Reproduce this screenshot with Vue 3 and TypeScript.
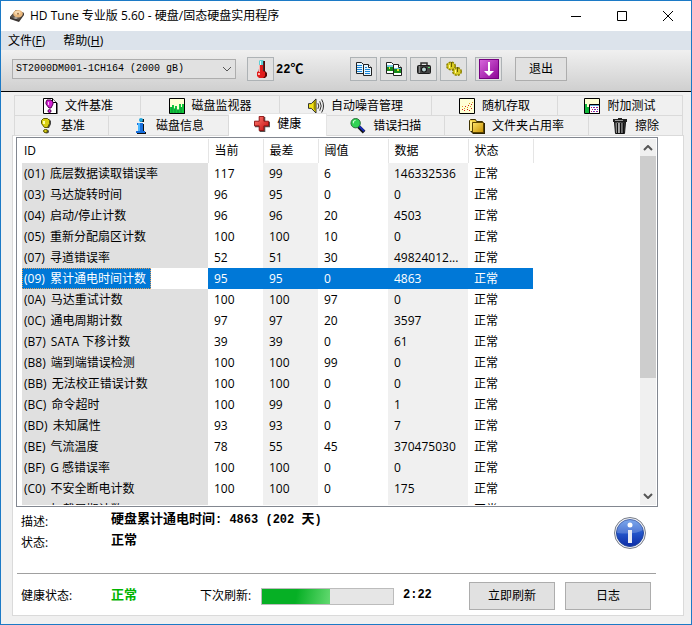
<script setup lang="ts">
import { ref } from 'vue'

interface Tab {
  label: string
  icon: string
  grow: number
}

interface Attribute {
  id: string
  name: string
  current: number
  worst: number
  threshold: number
  data: string
}

const drives: string[] = ['ST2000DM001-1CH164 (2000 gB)']
const drive = ref(drives[0])

const tools: { icon: string; label: string }[] = [
  { icon: 'copy-text', label: '复制文本' },
  { icon: 'copy-image', label: '复制图像' },
  { icon: 'camera', label: '保存截图' },
  { icon: 'gears', label: '选项' },
]

const backTabs: Tab[] = [
  { label: '文件基准', icon: 'file-bench', grow: 126 },
  { label: '磁盘监视器', icon: 'monitor', grow: 139 },
  { label: '自动噪音管理', icon: 'speaker', grow: 152 },
  { label: '随机存取', icon: 'random', grow: 126 },
  { label: '附加测试', icon: 'extra', grow: 125 },
]

const frontTabs: Tab[] = [
  { label: '基准', icon: 'bench', grow: 94 },
  { label: '磁盘信息', icon: 'info', grow: 120 },
  { label: '健康', icon: 'cross', grow: 98 },
  { label: '错误扫描', icon: 'scan', grow: 118 },
  { label: '文件夹占用率', icon: 'folder', grow: 144 },
  { label: '擦除', icon: 'trash', grow: 94 },
]
const activeTab = ref('健康')

const columns: string[] = ['ID', '当前', '最差', '阈值', '数据', '状态']

const attributes: Attribute[] = [
  { id: '01', name: '底层数据读取错误率', current: 117, worst: 99, threshold: 6, data: '146332536' },
  { id: '03', name: '马达旋转时间', current: 96, worst: 95, threshold: 0, data: '0' },
  { id: '04', name: '启动/停止计数', current: 96, worst: 96, threshold: 20, data: '4503' },
  { id: '05', name: '重新分配扇区计数', current: 100, worst: 100, threshold: 10, data: '0' },
  { id: '07', name: '寻道错误率', current: 52, worst: 51, threshold: 30, data: '49824012...' },
  { id: '09', name: '累计通电时间计数', current: 95, worst: 95, threshold: 0, data: '4863' },
  { id: '0A', name: '马达重试计数', current: 100, worst: 100, threshold: 97, data: '0' },
  { id: '0C', name: '通电周期计数', current: 97, worst: 97, threshold: 20, data: '3597' },
  { id: 'B7', name: 'SATA 下移计数', current: 39, worst: 39, threshold: 0, data: '61' },
  { id: 'B8', name: '端到端错误检测', current: 100, worst: 100, threshold: 99, data: '0' },
  { id: 'BB', name: '无法校正错误计数', current: 100, worst: 100, threshold: 0, data: '0' },
  { id: 'BC', name: '命令超时', current: 100, worst: 99, threshold: 0, data: '1' },
  { id: 'BD', name: '未知属性', current: 93, worst: 93, threshold: 0, data: '7' },
  { id: 'BE', name: '气流温度', current: 78, worst: 55, threshold: 45, data: '370475030' },
  { id: 'BF', name: 'G 感错误率', current: 100, worst: 100, threshold: 0, data: '0' },
  { id: 'C0', name: '不安全断电计数', current: 100, worst: 100, threshold: 0, data: '175' },
  { id: 'C1', name: '加载周期计数', current: 98, worst: 98, threshold: 0, data: '4863' },
]
const selectedId = ref('09')
</script>

<template>
  <svg class="sprite" aria-hidden="true">
    <defs>
      <linearGradient id="g-red" x1="0" y1="0" x2="1" y2="1">
        <stop offset="0" stop-color="#ff7a70" />
        <stop offset="1" stop-color="#c40d0d" />
      </linearGradient>
      <linearGradient id="g-violet" x1="0" y1="0" x2="1" y2="1">
        <stop offset="0" stop-color="#d867dc" />
        <stop offset="1" stop-color="#8d0396" />
      </linearGradient>
      <linearGradient id="g-blue" x1="0" y1="0" x2="0" y2="1">
        <stop offset="0" stop-color="#5c93e8" />
        <stop offset="0.5" stop-color="#2355c9" />
        <stop offset="1" stop-color="#0c2ba6" />
      </linearGradient>
      <linearGradient id="g-trash" x1="0" y1="0" x2="1" y2="0">
        <stop offset="0" stop-color="#333" />
        <stop offset="0.3" stop-color="#bbb" />
        <stop offset="1" stop-color="#222" />
      </linearGradient>
      <linearGradient id="g-folder" x1="0" y1="0" x2="1" y2="1">
        <stop offset="0" stop-color="#ffe46a" />
        <stop offset="1" stop-color="#c58f00" />
      </linearGradient>
    </defs>

    <symbol id="disk" viewBox="0 0 16 16">
      <path d="M1 9 7 2l8 3v2l-5 7-9-3z" fill="#3a3532" />
      <path d="M1 9 7 2l8 3-5 7z" fill="#5c534c" />
      <ellipse cx="9" cy="5.800" rx="4.800" ry="3.800" fill="#e9b77c" />
      <ellipse cx="8.500" cy="4.800" rx="3" ry="2" fill="#f8d9ae" />
      <ellipse cx="9" cy="5.800" rx="1" ry="1" fill="#a07448" />
      <path d="m4 10 3-1 2 1-2 1z" fill="#b8b2ab" />
    </symbol>

    <symbol id="thermo" viewBox="0 0 16 20">
      <path d="M7 2h5v10l2 2v3l-2 2H7l-2-2z" fill="#5a0505" />
      <path d="M6 2h4v10l2 1v4l-2 2H6l-2-2v-4l2-1z" fill="#e01c1c" />
      <path d="M7 1h3l1 1v4H6V2z" fill="#5fd0d6" />
      <path d="M7 2h1v4H7z" fill="#d6ffff" />
      <path d="M6 6h1v7H6zM5 14h2v2H5z" fill="#ffb0aa" />
      <path d="M10 2h1v10h-1z" fill="#333" />
    </symbol>

    <symbol id="copy-text" viewBox="0 0 18 18">
      <path d="M1.500 2.500h5l2 2v9h-7z" fill="#e6f6ff" stroke="#222" />
      <path d="M2 5.500h5M2 7.500h5M2 9.500h5M2 11.500h5" stroke="#1684d8" />
      <path d="M8.500 4.500h5l3 3v8h-8z" fill="#e6f6ff" stroke="#222" />
      <path d="M13.500 4.500v3h3" fill="#fff" stroke="#222" />
      <path d="M10 7.500h2M10 9.500h5M10 11.500h5M10 13.500h5" stroke="#1684d8" />
    </symbol>

    <symbol id="copy-image" viewBox="0 0 18 18">
      <path d="M1.500 2.500h5l2 2v9h-7z" fill="#fff" stroke="#222" />
      <path d="M2 5h6v6H2z" fill="#168b18" />
      <path d="M2 5h6v2H2z" fill="#71c6df" />
      <path d="M8.500 4.500h5l3 3v8h-8z" fill="#fff" stroke="#222" />
      <path d="M9 8h7v5H9z" fill="#168b18" />
      <path d="M9 8h7v1H9z" fill="#71c6df" />
      <path d="M12 9h2v2h-2zM4 7h1v2H4z" fill="#e6e438" />
      <path d="M13.500 4.500v3h3" fill="#fff" stroke="#222" />
    </symbol>

    <symbol id="camera" viewBox="0 0 18 18">
      <path d="M6 5V3h6v2" fill="none" stroke="#333" stroke-width="1.500" />
      <rect x="2.500" y="5.500" width="13" height="8" rx="1" fill="#454545" stroke="#1c1c1c" />
      <path d="M4 6h1v7H4z" fill="#888" />
      <circle cx="9" cy="9.500" r="3" fill="#111" />
      <circle cx="9" cy="9.500" r="2" fill="#b9d3d3" />
      <path d="M13 7h2v1h-2z" fill="#52e06c" />
    </symbol>

    <symbol id="gears" viewBox="0 0 18 18">
      <g fill="#d8cb22" stroke="#8d8200">
        <ellipse cx="6" cy="6" rx="4" ry="3.500" stroke-width="2" stroke-dasharray="2 1" />
        <ellipse cx="6" cy="6" rx="3.500" ry="3" stroke="none" />
        <ellipse cx="12" cy="11.500" rx="4" ry="3.500" stroke-width="2" stroke-dasharray="2 1" />
        <ellipse cx="12" cy="11.500" rx="3.500" ry="3" stroke="none" />
      </g>
      <path d="M6.500 2v5M12.500 7v5" stroke="#645c00" />
      <path d="M4 5h1v3H4zM10 10h1v3h-1z" fill="#fff79a" />
    </symbol>

    <symbol id="update" viewBox="0 0 20 20">
      <rect x="0.500" y="0.500" width="19" height="19" fill="url(#g-violet)" stroke="#750080" />
      <path d="M9 3h2v9h4l-5 5-5-5h4z" fill="#fff" />
    </symbol>

    <symbol id="file-bench" viewBox="0 0 16 16">
      <path d="M1.500.500h9l4 4v11h-13z" fill="#fff" stroke="#000" />
      <path d="M10.500.500v4h4" fill="#eee" stroke="#000" />
      <path d="M15 5v11H2" fill="none" stroke="#000" />
      <path d="M5 2h4l2 2v2l-2 4H7L4 6V4z" fill="#d323d3" stroke="#50004f" />
      <path d="M6 4h1v3H6z" fill="#ffc2ff" />
      <circle cx="7.500" cy="13" r="1.500" fill="#d323d3" stroke="#50004f" />
    </symbol>

    <symbol id="monitor" viewBox="0 0 16 16">
      <path d="M.500.500h15v15H.500z" fill="#ffffd4" stroke="#000" />
      <path d="M1 9h2V7h2v4h1V8h2v4h2V6h2v3h1V6h2v9H1z" fill="#10c63a" />
      <path d="M3 9v6M6 10v5M9 11v4M12 9v6" stroke="#0a8d36" />
      <path d="M15.500 1v14.500H1" fill="none" stroke="#000" />
    </symbol>

    <symbol id="speaker" viewBox="0 0 17 16">
      <path d="M.500 5.500h3l5-5v15l-5-5h-3z" fill="#f5e51b" stroke="#222" />
      <path d="M6 4 8 2v12l-2-3z" fill="#9b8b00" />
      <path d="M10.500 5q2 3 0 6M12.500 3q3 5 0 10M14.500 1q4 7 0 14" fill="none" stroke="#222" />
    </symbol>

    <symbol id="random" viewBox="0 0 16 16">
      <path d="M.500.500h15v15H.500z" fill="#ffffd4" stroke="#000" />
      <path d="M3 11h1v1H3zM5 12h1v1H5zM8 11h1v1H8zM10 12h1v1h-1zM12 10h1v1h-1zM6 8h1v1H6zM9 7h1v1H9zM12 6h1v1h-1z" fill="#d02020" />
      <path d="M3 8h1v1H3zM5 10h1v1H5zM8 9h1v1H8zM11 8h1v1h-1zM10 5h1v1h-1zM13 4h1v1h-1z" fill="#e09a20" />
    </symbol>

    <symbol id="extra" viewBox="0 0 16 16">
      <path d="M.500.500h15v15H.500z" fill="#ffffd4" stroke="#000" />
      <path d="M1 6h2v3h3v6H1z" fill="#10b63a" />
      <path d="M5.500 6.500h10v9h-10z" fill="#fff" stroke="#000" />
      <path d="M6 7h9v1H6z" fill="#6aa8d8" />
      <path d="M7 9h1v1H7zM10 9h1v1h-1zM13 9h1v1h-1zM8 11h1v1H8zM11 11h1v1h-1zM7 13h1v1H7zM10 13h1v1h-1zM13 13h1v1h-1z" fill="#c0146c" />
      <path d="M9 9h1v1H9zM12 9h1v1h-1zM10 11h1v1h-1zM13 11h1v1h-1zM9 13h1v1H9zM12 13h1v1h-1z" fill="#3a46c8" />
    </symbol>

    <symbol id="bench" viewBox="0 0 16 16">
      <path d="M6 1h5l2 2v3l-2 4H7L5 6V3z" fill="#444" />
      <path d="M5.500.500h4l2 2v3l-2 4h-3l-3-4v-3z" fill="#d9cf13" stroke="#5d5800" />
      <path d="M5 3h2v3H5z" fill="#ffffa5" />
      <ellipse cx="8.500" cy="13.500" rx="2.500" ry="2" fill="#444" />
      <ellipse cx="7.500" cy="13" rx="2" ry="1.500" fill="#d9cf13" stroke="#5d5800" />
    </symbol>

    <symbol id="info" viewBox="0 0 16 16">
      <path d="M7 1h4v3H7zM5 6h6v8h2v2H4v-2h2V8H5z" fill="#111" />
      <circle cx="8" cy="2" r="2" fill="#24a6da" />
      <path d="M4 5h6v8h2v2H3v-2h2V7H4z" fill="#176edc" />
      <path d="M5 5h2v8H5z" fill="#49b6ff" />
    </symbol>

    <symbol id="cross" viewBox="0 0 17 17">
      <path d="M6 1h6v5h5v6h-5v5H6v-5H1V6h5z" fill="#555" />
      <path d="M5.500.500h5v5h5v5h-5v5h-5v-5h-5v-5h5z" fill="url(#g-red)" stroke="#8d1111" />
    </symbol>

    <symbol id="scan" viewBox="0 0 17 17">
      <path d="m9 9 6 6" stroke="#111" stroke-width="4" />
      <path d="m9 8 6 6" stroke="#172bc0" stroke-width="2" />
      <circle cx="6" cy="5.500" r="5" fill="#31d354" stroke="#286a38" />
      <path d="M3 5q0-3 3-3v1q-2 0-2 3z" fill="#d4ffd9" />
    </symbol>

    <symbol id="folder" viewBox="0 0 16 16">
      <path d="M.500 12.500v-10l1-1h5l1 2h6v2" fill="#f3d147" stroke="#3e3100" />
      <path d="M3 5h13v11H4l-3-3z" fill="#2c2200" />
      <path d="M3.500 4.500h11v10h-11z" fill="url(#g-folder)" stroke="#5a4300" />
      <path d="M1 3h2v10H1z" fill="#ffec84" />
    </symbol>

    <symbol id="trash" viewBox="0 0 16 16">
      <path d="M6 0h4v1h5v3H1V1h5z" fill="#222" />
      <path d="M2.500 4h11l-1 11.500h-9z" fill="url(#g-trash)" stroke="#111" />
      <path d="M5.500 5v10M8.500 5v10M11.500 5v10" stroke="#111" />
      <path d="M3 2h8v1H3z" fill="#999" />
    </symbol>
  </svg>

  <div class="window">
    <header class="titlebar">
      <svg class="app-icon"><use href="#disk" /></svg>
      <h1 class="title">HD Tune 专业版 5.60 - 硬盘/固态硬盘实用程序</h1>
      <button class="win-btn" type="button" aria-label="最小化">
        <svg viewBox="0 0 12 12"><path d="M1 6.500h10" /></svg>
      </button>
      <button class="win-btn" type="button" aria-label="最大化">
        <svg viewBox="0 0 12 12"><path d="M1.500 1.500h9v9h-9z" /></svg>
      </button>
      <button class="win-btn" type="button" aria-label="关闭">
        <svg viewBox="0 0 12 12"><path d="m1 1 10 10M11 1 1 11" /></svg>
      </button>
    </header>

    <nav class="menubar">
      <button class="menu" type="button">文件(<u>F</u>)</button>
      <button class="menu" type="button">帮助(<u>H</u>)</button>
    </nav>

    <div class="toolbar">
      <div class="combo">
        <select v-model="drive" class="drive" aria-label="驱动器">
          <option v-for="d in drives" :key="d">{{ d }}</option>
        </select>
        <svg class="chevron" viewBox="0 0 10 6"><path d="m1 1 4 4 4-4" /></svg>
      </div>
      <button class="tool" type="button" aria-label="温度">
        <svg class="thermo"><use href="#thermo" /></svg>
      </button>
      <span class="temp mono"><span>22</span>℃</span>
      <div class="tool-group">
        <button v-for="t in tools" :key="t.icon" class="tool" type="button" :aria-label="t.label">
          <svg class="tool-icon"><use :href="'#' + t.icon" /></svg>
        </button>
      </div>
      <button class="tool" type="button" aria-label="检查更新">
        <svg class="update"><use href="#update" /></svg>
      </button>
      <button class="btn exit" type="button">退出</button>
    </div>

    <main class="body">
      <div class="tabs" role="tablist">
        <div class="tab-row">
          <button
            v-for="t in backTabs"
            :key="t.label"
            class="tab"
            type="button"
            role="tab"
            :style="{ flexGrow: t.grow }"
          >
            <svg class="tab-icon"><use :href="'#' + t.icon" /></svg>{{ t.label }}
          </button>
        </div>
        <div class="tab-row">
          <button
            v-for="t in frontTabs"
            :key="t.label"
            class="tab"
            :class="{ active: t.label === activeTab }"
            type="button"
            role="tab"
            :aria-selected="t.label === activeTab"
            :style="{ flexGrow: t.grow }"
            @click="activeTab = t.label"
          >
            <svg class="tab-icon"><use :href="'#' + t.icon" /></svg>{{ t.label }}
          </button>
        </div>
      </div>

      <section class="panel" role="tabpanel">
        <div class="list">
          <div class="rows">
            <table class="table">
              <colgroup>
                <col class="c-id" />
                <col class="c-num" />
                <col class="c-num" />
                <col class="c-limit" />
                <col class="c-data" />
                <col class="c-state" />
              </colgroup>
              <thead>
                <tr>
                  <th v-for="c in columns" :key="c" scope="col">{{ c }}</th>
                </tr>
              </thead>
              <tbody>
                <tr
                  v-for="a in attributes"
                  :key="a.id"
                  :class="{ selected: a.id === selectedId }"
                  @click="selectedId = a.id"
                >
                  <td><span class="name"><span class="code">({{ a.id }})</span> {{ a.name }}</span></td>
                  <td>{{ a.current }}</td>
                  <td>{{ a.worst }}</td>
                  <td>{{ a.threshold }}</td>
                  <td>{{ a.data }}</td>
                  <td>正常</td>
                </tr>
              </tbody>
            </table>
          </div>
          <div class="scrollbar" aria-hidden="true">
            <svg class="arrow" viewBox="0 0 10 6"><path d="m1 5 4-4 4 4" /></svg>
            <div class="track"><div class="thumb"></div></div>
            <svg class="arrow" viewBox="0 0 10 6"><path d="m1 1 4 4 4-4" /></svg>
          </div>
        </div>

        <div class="detail">
          <dl class="facts">
            <dt>描述:</dt>
            <dd class="mono">硬盘累计通电时间<span>: 4863 (202 </span>天<span>)</span></dd>
            <dt>状态:</dt>
            <dd class="mono">正常</dd>
          </dl>
          <svg class="about" viewBox="0 0 32 32">
            <circle cx="16" cy="16" r="15.500" fill="#eef0f4" stroke="#777c88" />
            <circle cx="16" cy="16" r="13.500" fill="url(#g-blue)" stroke="#23479f" />
            <path d="M3 16a13 13 0 0 1 26-3q-8 5-26 3z" fill="#fff" opacity="0.200" />
            <circle cx="16" cy="8" r="2.500" fill="#fff" />
            <path d="M14 13h4v13h-4z" fill="#e8ebf4" />
          </svg>
        </div>

        <footer class="footer">
          <span class="health-label">健康状态:</span>
          <strong class="health mono">正常</strong>
          <label for="refresh">下次刷新:</label>
          <progress id="refresh" class="bar" max="100" value="52"></progress>
          <span class="time mono"><span>2:22</span></span>
          <button class="btn wide" type="button">立即刷新</button>
          <button class="btn wide" type="button">日志</button>
        </footer>
      </section>
    </main>
  </div>
</template>

<style>
body {
  margin: 0;
}
</style>

<style scoped>
.sprite {
  position: absolute;
  width: 0;
  height: 0;
}

.window {
  box-sizing: border-box;
  display: flex;
  flex-direction: column;
  height: 100vh;
  border: 1px solid #1c7ac6;
  background: #f0f0f0;
  color: #000;
  font: 12px/18px 'Open Sans', 'Noto Sans CJK SC', sans-serif;
}

button,
select {
  box-sizing: border-box;
  margin: 0;
  padding: 0;
  color: inherit;
  font: inherit;
}

.titlebar {
  display: flex;
  align-items: center;
  height: 30px;
  padding-left: 8px;
  background: #fff;
}

.app-icon {
  width: 16px;
  height: 16px;
  margin-right: 5px;
}

.title {
  flex: 1;
  margin: 0;
  font-size: 12px;
  font-weight: 400;
  white-space: nowrap;
}

.win-btn {
  display: grid;
  place-items: center;
  width: 46px;
  height: 30px;
  border: 0;
  background: none;
}

.win-btn svg {
  width: 12px;
  height: 12px;
  fill: none;
  stroke: #000;
}

.menubar {
  display: flex;
  gap: 18px;
  height: 19px;
  padding-left: 7px;
  background: #dce3eb;
}

.menu {
  border: 0;
  background: none;
  line-height: 18px;
}

.toolbar {
  display: flex;
  align-items: center;
  height: 42px;
  box-sizing: border-box;
  padding: 0 11px 3px;
  border-bottom: 1px solid #000;
  background: linear-gradient(#f0f0f0, #cfcfcf);
}

.combo {
  display: grid;
  align-items: center;
  flex: 0 1 224px;
  margin-right: 11px;
}

.combo > * {
  grid-area: 1 / 1;
}

.drive {
  appearance: none;
  width: 100%;
  height: 20px;
  padding: 0 20px 0 3px;
  border: 1px solid #adadad;
  border-radius: 0;
  background: #e1e1e1;
  font: 10px/18px 'Liberation Mono', monospace;
}

.chevron,
.arrow {
  width: 10px;
  height: 6px;
  fill: none;
  stroke: #555;
}

.chevron {
  justify-self: end;
  margin-right: 4px;
  pointer-events: none;
}

.tool {
  display: grid;
  place-items: center;
  width: 27px;
  height: 24px;
  border: 1px solid #adb2b5;
  background: #e1e1e1;
}

.tool-icon {
  width: 18px;
  height: 18px;
}

.thermo {
  width: 16px;
  height: 20px;
}

.update {
  width: 20px;
  height: 20px;
}

.mono {
  font-size: 13px;
  font-weight: 700;
}

.mono span {
  font-family: 'Liberation Mono', monospace;
  font-size: 12px;
  white-space: pre;
}

.temp {
  flex: 0 0 74px;
  padding-left: 2px;
}

.tool-group {
  display: flex;
  gap: 3px;
  margin-right: 8px;
}

.btn {
  border: 1px solid #adadad;
  background: #e1e1e1;
}

.exit {
  width: 52px;
  height: 24px;
  margin-left: 13px;
}

.body {
  display: flex;
  flex: 1;
  flex-direction: column;
  min-height: 0;
  padding: 3px 7px 8px 11px;
}

.tabs {
  padding: 0 1px 0 2px;
}

.tab-row {
  display: flex;
  border-left: 1px solid #dadada;
}

.tab {
  display: flex;
  flex: 1 1 0;
  align-items: center;
  justify-content: center;
  gap: 7px;
  height: 20px;
  border: 1px solid #dadada;
  border-width: 1px 1px 0 0;
  background: #f0f0f0;
  white-space: nowrap;
}

.tab.active {
  z-index: 1;
  height: 23px;
  margin: -2px 0 -1px;
  padding-bottom: 3px;
  border-color: #e4e4e4;
  background: #fff;
}

.tab-icon {
  flex: none;
  width: 16px;
  height: 16px;
}

.panel {
  display: flex;
  flex: 1;
  flex-direction: column;
  min-height: 0;
  padding: 1px 27px 5px 4px;
  border: 1px solid #dadada;
  background: #fff;
}

.list {
  display: flex;
  flex: 1;
  min-height: 0;
  border: 1px solid #828790;
  margin: 0 -2px 0 -1px;
  padding: 1px;
}

.rows {
  flex: 1;
  min-width: 0;
  overflow: hidden;
  padding-left: 4px;
}

.table {
  width: 511px;
  border-collapse: collapse;
  table-layout: fixed;
}

.c-id {
  width: 186px;
}

.c-num {
  width: 55px;
}

.c-limit {
  width: 70px;
}

.c-data {
  width: 80px;
}

.c-state {
  width: 65px;
}

th,
td {
  box-sizing: border-box;
  height: 21px;
  padding: 0 0 0 6px;
  overflow: hidden;
  line-height: 20px;
  text-align: left;
  white-space: nowrap;
}

th {
  height: 24px;
  border-right: 1px solid #e5e5e5;
  font-weight: 400;
}

th:first-child {
  padding-left: 2px;
}

td:first-child {
  padding: 0;
  background: #e0e0e0;
}

td:nth-child(3),
td:nth-child(5) {
  background: #f0f0f0;
}

.name {
  display: inline-block;
  height: 21px;
  padding: 0 5px 0 2px;
  line-height: 21px;
  vertical-align: top;
}

.code {
  margin-right: 2px;
}

.selected td {
  background: #0078d7;
  color: #fff;
}

.selected td:first-child {
  background: #fff;
}

.selected .name {
  background: #0078d7;
  outline: 1px dotted #e0a060;
  outline-offset: -1px;
}

.scrollbar {
  display: flex;
  flex-direction: column;
  align-items: center;
  width: 16px;
  padding: 6px 0;
  background: #f0f0f0;
}

.arrow {
  stroke-width: 2;
}

.track {
  flex: 1;
  width: 100%;
  padding: 5px 0;
}

.thumb {
  height: 67%;
  background: #cdcdcd;
}

.detail {
  display: flex;
  justify-content: space-between;
  padding: 1px 10px 23px 4px;
  border-bottom: 1px solid #a0a0a0;
}

.facts {
  display: grid;
  grid-template-columns: 90px auto;
  margin: 0;
  line-height: 21px;
}

.facts dt {
  height: 18px;
  padding-top: 3px;
}

.facts dd {
  height: 21px;
  margin: 0;
}

.about {
  width: 32px;
  height: 32px;
  margin-top: 9px;
}

.footer {
  display: flex;
  align-items: center;
  padding: 8px 5px 0 4px;
}

.health-label {
  width: 90px;
}

.health {
  width: 89px;
  padding-bottom: 4px;
  color: #00b400;
}

.bar {
  appearance: none;
  box-sizing: border-box;
  flex: 1;
  min-width: 0;
  height: 17px;
  margin: 0 9px 0 10px;
  border: 1px solid #bcbcbc;
  background: #e6e6e6;
}

.bar::-webkit-progress-bar {
  background: #e6e6e6;
}

.bar::-webkit-progress-value {
  background: linear-gradient(100deg, #06b025 50%, #63d970);
}

.time {
  width: 66px;
  padding-bottom: 4px;
}

.wide {
  width: 86px;
  height: 28px;
}

.wide + .wide {
  margin-left: 10px;
}
</style>
